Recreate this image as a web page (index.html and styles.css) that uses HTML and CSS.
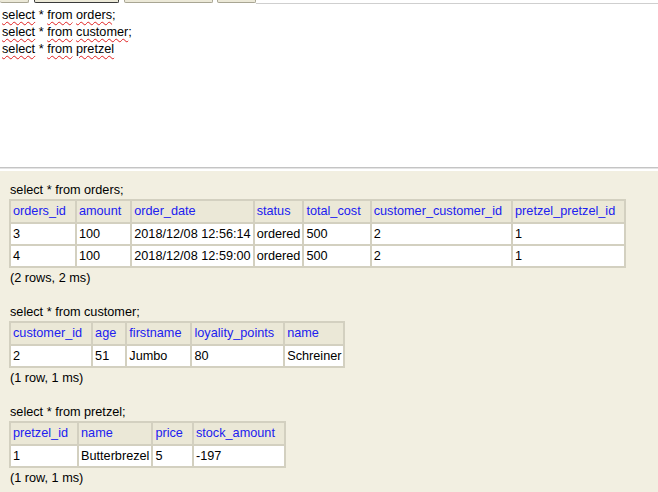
FILE: index.html
```html
<!DOCTYPE html>
<html>
<head>
<meta charset="utf-8">
<link rel="stylesheet" href="styles.css">
</head>
<body>
<div class="toolbar">
  <div class="btn b1"></div>
  <div class="btn b2"></div>
  <div class="btn b3"></div>
  <div class="btn b4"></div>
  <div class="fill"></div>
</div>
<div class="editor">
  <div class="line"><span class="sp">select</span> * <span class="sp">from</span> <span class="sp">orders</span>;</div>
  <div class="line"><span class="sp">select</span> * <span class="sp">from</span> <span class="sp">customer</span>;</div>
  <div class="line"><span class="sp">select</span> * <span class="sp">from</span> <span class="sp">pretzel</span></div>
</div>
<div class="divider"></div>
<div class="results">
  <div class="block">
    <div class="caption">select * from orders;</div>
    <table class="grid">
      <tr><th>orders_id</th><th>amount</th><th>order_date</th><th>status</th><th>total_cost</th><th>customer_customer_id</th><th>pretzel_pretzel_id</th></tr>
      <tr><td>3</td><td>100</td><td>2018/12/08 12:56:14</td><td>ordered</td><td>500</td><td>2</td><td>1</td></tr>
      <tr><td>4</td><td>100</td><td>2018/12/08 12:59:00</td><td>ordered</td><td>500</td><td>2</td><td>1</td></tr>
    </table>
    <div class="status">(2 rows, 2 ms)</div>
  </div>
  <div class="block">
    <div class="caption">select * from customer;</div>
    <table class="grid">
      <tr><th>customer_id</th><th>age</th><th>firstname</th><th>loyality_points</th><th>name</th></tr>
      <tr><td>2</td><td>51</td><td>Jumbo</td><td>80</td><td>Schreiner</td></tr>
    </table>
    <div class="status">(1 row, 1 ms)</div>
  </div>
  <div class="block">
    <div class="caption">select * from pretzel;</div>
    <table class="grid">
      <tr><th>pretzel_id</th><th>name</th><th>price</th><th>stock_amount</th></tr>
      <tr><td>1</td><td>Butterbrezel</td><td>5</td><td>-197</td></tr>
    </table>
    <div class="status">(1 row, 1 ms)</div>
  </div>
</div>
</body>
</html>
```
FILE: styles.css
```css
html, body {
  margin: 0;
  padding: 0;
  height: 492px;
  overflow: hidden;
  background: #f2efe1;
  font-family: "Liberation Sans", Arial, sans-serif;
  font-size: 12.7px;
  color: #000;
}
.toolbar {
  display: flex;
  height: 4px;
  background: #fff;
}
.btn {
  height: 2px;
  background: #ece9d8;
  border: 1px solid #a8a593;
  border-top: none;
  border-radius: 0 0 2px 2px;
}
.b1 { width: 28px; border-left: none; }
.b2 { width: 83px; margin-left: 5px; border-color: #3a3a3a; }
.b3 { width: 87px; margin-left: 5px; }
.b4 { width: 37px; margin-left: 4px; }
.fill {
  flex: 1;
  height: 3px;
  border-bottom: 1px solid #cfcfcf;
}
.editor {
  height: 160px;
  background: #fff;
  padding: 3px 0 0 2px;
}
.line {
  line-height: 17px;
  white-space: pre;
}
.sp {
  text-decoration: underline wavy #e02020;
  text-decoration-thickness: 1px;
  text-underline-offset: 2px;
}
.divider {
  height: 1px;
  background: #c4c4c4;
  border-bottom: 1px solid #e4e4e4;
  margin-bottom: 2px;
  box-shadow: 0 2px 0 #fff;
}
.results {
  padding: 11px 9px 0 9px;
}
.block {
  margin-bottom: 18px;
}
.caption {
  line-height: 16px;
  padding-left: 1px;
}
.grid {
  border-collapse: collapse;
  margin-top: 1px;
}
.grid th, .grid td {
  border: 2px solid #d3d0c0;
  text-align: left;
  white-space: nowrap;
  line-height: 15px;
  font-weight: normal;
}
.grid th {
  background: #ebe8d7;
  color: #2020f0;
  padding: 3px 9px 3px 2px;
}
.grid td {
  background: #fff;
  padding: 3px 2px 2px 2px;
}
.status {
  line-height: 16px;
  margin-top: 2px;
  padding-left: 1px;
}
```
